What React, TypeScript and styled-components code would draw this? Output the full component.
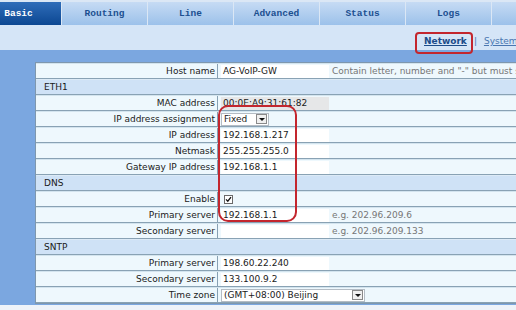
import React from "react";
import styled, { createGlobalStyle } from "styled-components";

const GlobalStyle = createGlobalStyle`
  html, body {
    margin: 0;
    padding: 0;
  }
  body {
    width: 516px;
    height: 310px;
    overflow: hidden;
    background: #eef3f9;
    font-family: "DejaVu Sans", Verdana, sans-serif;
  }
`;

const Page = styled.div`
  position: relative;
  width: 516px;
  height: 310px;
  overflow: hidden;
`;

const TabBar = styled.div`
  display: flex;
  gap: 1px;
  height: 23px;
  padding-top: 2px;
  margin-left: -24px;
  background: #dbe7f5;
`;

const Tab = styled.div<{ $active?: boolean }>`
  flex: none;
  width: 85px;
  display: flex;
  align-items: center;
  justify-content: center;
  font-family: "Liberation Mono", "DejaVu Sans Mono", monospace;
  font-weight: bold;
  font-size: 9.5px;
  color: ${(p) => (p.$active ? "#ffffff" : "#1c4f90")};
  background: ${(p) =>
    p.$active
      ? "linear-gradient(#2f6db9, #0c4792)"
      : "linear-gradient(#c6dbf4, #9cc1ea)"};
`;

const SubBar = styled.div`
  height: 25px;
  box-sizing: border-box;
  padding: 0 0 4px 424px;
  display: flex;
  align-items: flex-end;
  gap: 7px;
  background: #d5e5f7;
  white-space: nowrap;
  font-size: 9px;
  color: #4a76b0;
`;

const SubLink = styled.span<{ $current?: boolean }>`
  text-decoration: underline;
  font-weight: ${(p) => (p.$current ? "bold" : "normal")};
  color: ${(p) => (p.$current ? "#1d4c8a" : "#4a76b0")};
`;

const Panel = styled.div`
  background: #7ba7e0;
  padding: 12px 0 1px 35px;
`;

const Table = styled.div`
  width: 640px;
  border: 1px solid #7e97ae;
  border-right: none;
  font-size: 9px;
  color: #1a1a1a;
`;

const Row = styled.div`
  display: grid;
  grid-template-columns: 182px 1fr;
  height: 16px;
  box-sizing: border-box;
  border-top: 1px solid #d3e4ee;
  border-bottom: 1px solid #89a2b4;
  background: #eef8fd;
`;

const Section = styled.div`
  height: 16px;
  box-sizing: border-box;
  border-top: 1px solid #dceaf6;
  border-bottom: 1px solid #89a2b4;
  background: #cfe2f6;
  padding-left: 8px;
  line-height: 14px;
`;

const Label = styled.div`
  text-align: right;
  padding-right: 2px;
  border-right: 1px solid #86a0b3;
  line-height: 14px;
  white-space: nowrap;
`;

const Value = styled.div`
  display: flex;
  align-items: center;
  gap: 3px;
  padding-left: 3px;
  white-space: nowrap;
`;

const Field = styled.div<{ $readOnly?: boolean }>`
  flex: none;
  width: 106px;
  height: 13px;
  padding-left: 2px;
  line-height: 13px;
  background: ${(p) => (p.$readOnly ? "#e6e7e8" : "#ffffff")};
`;

const Hint = styled.span`
  color: #767676;
`;

const Select = styled.div<{ $width: number }>`
  flex: none;
  width: ${(p) => p.$width}px;
  height: 13px;
  box-sizing: border-box;
  display: flex;
  align-items: center;
  justify-content: space-between;
  padding: 0 1px 0 2px;
  background: #ffffff;
  border: 1px solid #b4bcc4;
`;

const Arrow = styled.span`
  width: 11px;
  height: 10px;
  box-sizing: border-box;
  display: flex;
  align-items: center;
  justify-content: center;
  background: #f0f0f0;
  border: 1px solid #8a8a8a;
  &::after {
    content: "";
    border-left: 3px solid transparent;
    border-right: 3px solid transparent;
    border-top: 3px solid #111;
  }
`;

const Check = styled.span`
  margin-left: 3px;
  width: 9px;
  height: 9px;
  box-sizing: border-box;
  display: flex;
  align-items: center;
  justify-content: center;
  background: #fff;
  border: 1px solid #6a6a6a;
`;

const Mark = styled.div<{ $x: number; $y: number; $w: number; $h: number; $r: number }>`
  position: absolute;
  left: ${(p) => p.$x}px;
  top: ${(p) => p.$y}px;
  width: ${(p) => p.$w}px;
  height: ${(p) => p.$h}px;
  box-sizing: border-box;
  border: 2px solid #c3262e;
  border-radius: ${(p) => p.$r}px;
  pointer-events: none;
`;

const tabs = ["Basic", "Routing", "Line", "Advanced", "Status", "Logs", "Tools"];

function Input({ value, hint, readOnly }: { value: string; hint?: string; readOnly?: boolean }) {
  return (
    <Value>
      <Field $readOnly={readOnly}>{value}</Field>
      {hint && <Hint>{hint}</Hint>}
    </Value>
  );
}

export default function App() {
  return (
    <Page>
      <GlobalStyle />
      <TabBar>
        {tabs.map((t, i) => (
          <Tab key={t} $active={i === 0}>
            {t}
          </Tab>
        ))}
      </TabBar>
      <SubBar>
        <SubLink $current>Network</SubLink>
        <span>|</span>
        <SubLink>System</SubLink>
      </SubBar>
      <Panel>
        <Table>
          <Row>
            <Label>Host name</Label>
            <Input value="AG-VoIP-GW" hint={'Contain letter, number and "-" but must start with a letter'} />
          </Row>
          <Section>ETH1</Section>
          <Row>
            <Label>MAC address</Label>
            <Input value="00:0E:A9:31:61:82" readOnly />
          </Row>
          <Row>
            <Label>IP address assignment</Label>
            <Value>
              <Select $width={48}>
                Fixed
                <Arrow />
              </Select>
            </Value>
          </Row>
          <Row>
            <Label>IP address</Label>
            <Input value="192.168.1.217" />
          </Row>
          <Row>
            <Label>Netmask</Label>
            <Input value="255.255.255.0" />
          </Row>
          <Row>
            <Label>Gateway IP address</Label>
            <Input value="192.168.1.1" />
          </Row>
          <Section>DNS</Section>
          <Row>
            <Label>Enable</Label>
            <Value>
              <Check>
                <svg width="7" height="7" viewBox="0 0 7 7">
                  <path d="M1 3.4 L2.8 5.2 L6 1.2" fill="none" stroke="#111" strokeWidth="1.3" />
                </svg>
              </Check>
            </Value>
          </Row>
          <Row>
            <Label>Primary server</Label>
            <Input value="192.168.1.1" hint="e.g. 202.96.209.6" />
          </Row>
          <Row>
            <Label>Secondary server</Label>
            <Input value="" hint="e.g. 202.96.209.133" />
          </Row>
          <Section>SNTP</Section>
          <Row>
            <Label>Primary server</Label>
            <Input value="198.60.22.240" />
          </Row>
          <Row>
            <Label>Secondary server</Label>
            <Input value="133.100.9.2" />
          </Row>
          <Row>
            <Label>Time zone</Label>
            <Value>
              <Select $width={144}>
                (GMT+08:00) Beijing
                <Arrow />
              </Select>
            </Value>
          </Row>
        </Table>
      </Panel>
      <Mark $x={415} $y={32} $w={58} $h={22} $r={4} />
      <Mark $x={218} $y={105} $w={79} $h={117} $r={10} />
    </Page>
  );
}
